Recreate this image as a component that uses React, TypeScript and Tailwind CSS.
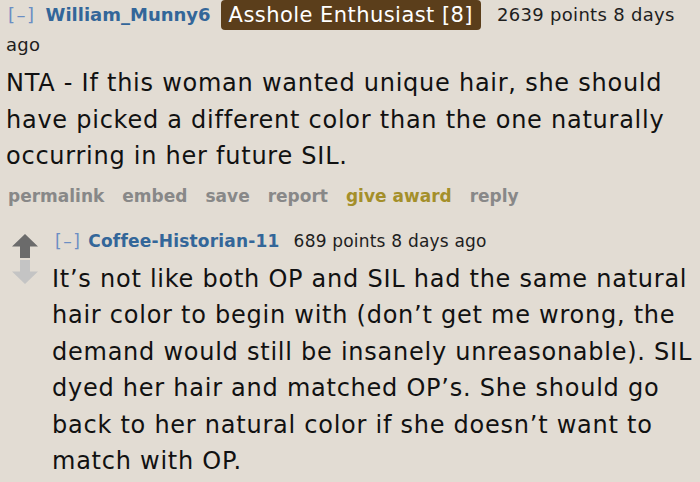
const font = "font-['Verdana','DejaVu_Sans',sans-serif]";

function Arrow({ up, color }: { up?: boolean; color: string }) {
  return (
    <svg width="26" height="24" viewBox="0 0 26 24" className={up ? "block" : "block rotate-180"}>
      <path d="M13 0 L26 12.5 L18 12.5 L18 24 L8 24 L8 12.5 L0 12.5 Z" fill={color} />
    </svg>
  );
}

export default function App() {
  return (
    <div className={`w-[700px] h-[482px] overflow-hidden bg-[#e2dcd3] text-[#111] ${font}`}>
      <div className="pl-[6px] pr-[4px]">
        <div className="text-[18px] leading-[30px]">
          <span className="ml-[2px] mr-[10px] tracking-[1.5px] text-[#6b8ec3]">[–]</span>
          <span className="font-bold text-[#336699]">William_Munny6</span>
          <span className="ml-[10px] mr-[16px] inline-block rounded-[4px] bg-[#5b3e1b] px-[8px] align-top text-[21px] leading-[30px] tracking-[0.45px] text-white">
            Asshole Enthusiast [8]
          </span>
          <span className="tracking-[0.3px] text-[#1e1e1e]">2639 points 8 days ago</span>
        </div>
        <p className="mt-[5px] text-[24px] leading-[36.5px] tracking-[0.75px]">
          NTA - If this woman wanted unique hair, she should have picked a different color than the one naturally occurring in her future SIL.
        </p>
        <div className="mt-[7px] flex gap-[18px] pl-[2px] text-[17px] font-bold leading-[28px] text-[#888]">
          <span>permalink</span>
          <span>embed</span>
          <span>save</span>
          <span>report</span>
          <span className="text-[#a48f2a]">give award</span>
          <span>reply</span>
        </div>
        <div className="mt-[17px] flex">
          <div className="flex w-[46px] flex-col gap-[2px] pl-[6px] pt-[7px]">
            <Arrow up color="#6b6b6b" />
            <Arrow color="#c4c4c4" />
          </div>
          <div className="flex-1">
            <div className="text-[17px] leading-[28px] tracking-[0.2px]">
              <span className="ml-[3px] mr-[7px] tracking-[1.5px] text-[#6b8ec3]">[–]</span>
              <span className="font-bold text-[#336699]">Coffee-Historian-11</span>
              <span className="ml-[14px] text-[#1e1e1e]">689 points 8 days ago</span>
            </div>
            <p className="mt-[6px] text-[24px] leading-[36.5px] tracking-[0.75px]">
              It’s not like both OP and SIL had the same natural hair color to begin with (don’t get me wrong, the demand would still be insanely unreasonable). SIL dyed her hair and matched OP’s. She should go back to her natural color if she doesn’t want to match with OP.
            </p>
          </div>
        </div>
      </div>
    </div>
  );
}
